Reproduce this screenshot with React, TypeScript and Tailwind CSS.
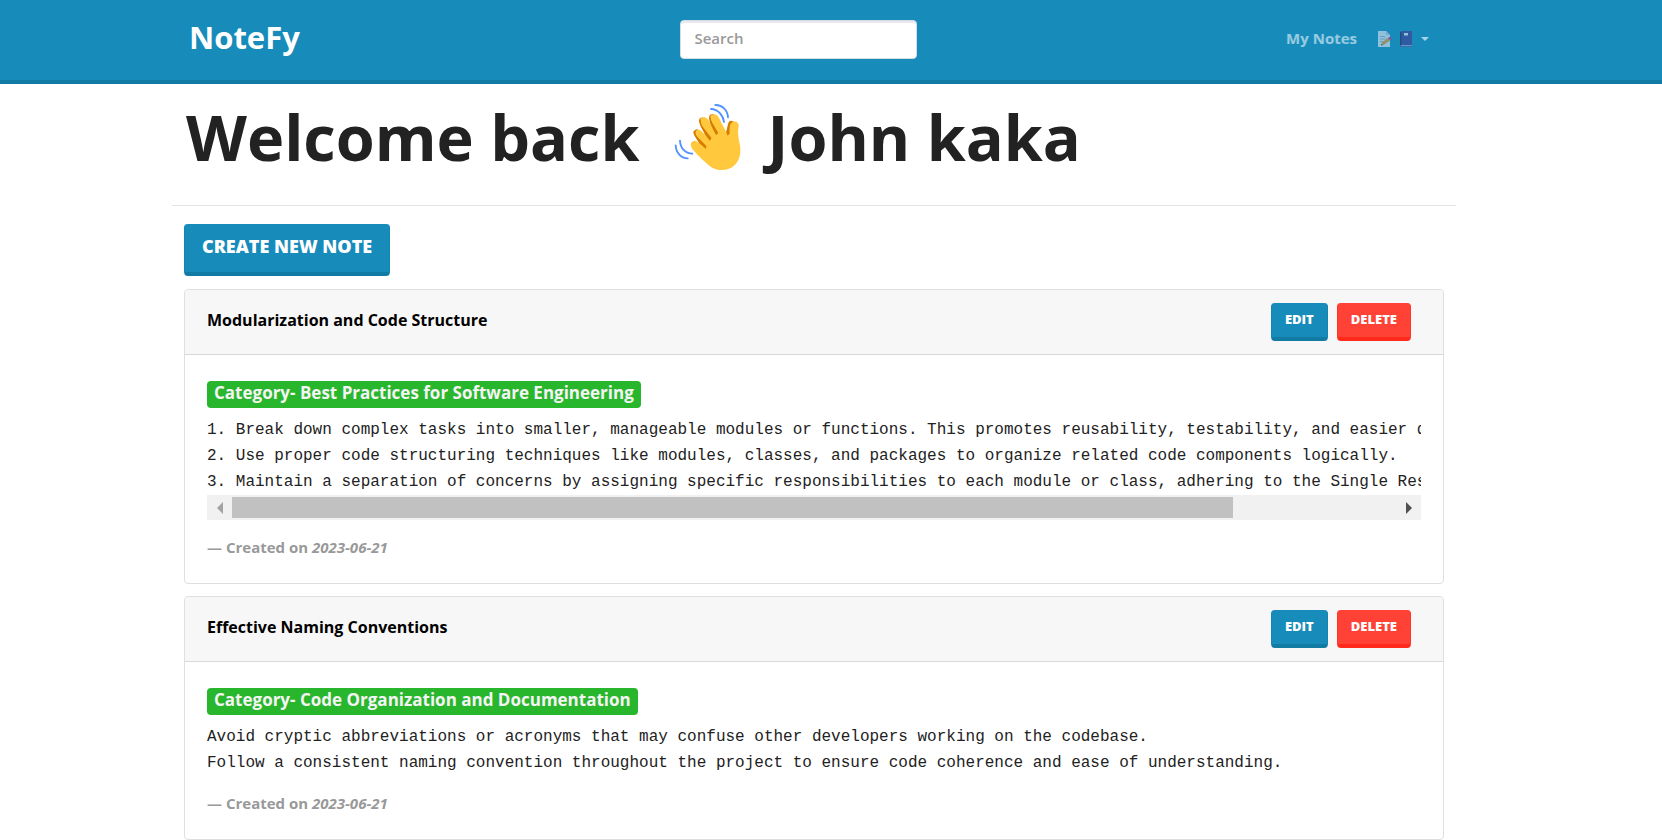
import { useRef } from "react";

type Note = {
  title: string;
  category: string;
  lines: string[];
  created: string;
  scrollable?: boolean;
};

const notes: Note[] = [
  {
    title: "Modularization and Code Structure",
    category: "Best Practices for Software Engineering",
    lines: [
      "1. Break down complex tasks into smaller, manageable modules or functions. This promotes reusability, testability, and easier debugging.",
      "2. Use proper code structuring techniques like modules, classes, and packages to organize related code components logically.",
      "3. Maintain a separation of concerns by assigning specific responsibilities to each module or class, adhering to the Single Responsibility Principle.",
    ],
    created: "2023-06-21",
    scrollable: true,
  },
  {
    title: "Effective Naming Conventions",
    category: "Code Organization and Documentation",
    lines: [
      "Avoid cryptic abbreviations or acronyms that may confuse other developers working on the codebase.",
      "Follow a consistent naming convention throughout the project to ensure code coherence and ease of understanding.",
    ],
    created: "2023-06-21",
  },
];

function WavingHand() {
  return (
    <svg viewBox="0 0 240 240" className="mr-[18px] ml-[30px] size-20 shrink-0" role="img" aria-label="Waving hand">
      <g fill="none" stroke="#d67d00" strokeWidth="19" strokeLinecap="round">
        <path d="M80 104 L101 141" />
        <path d="M97 68 L118 115" />
        <path d="M127 58 L136 102" />
        <path d="M184 78 L176 110" />
      </g>
      <path
        fill="#ffc83d"
        d="M63 143 C60 131 71 126 79 130 L107 150 L111 146 L78 112 C71 100 84 89 94 99 L121 126 L126 122 L92 78 C84 60 103 51 114 64 L140 109 L145 105 L122 66 C115 47 137 42 146 58 L173 111 L179 107 C178 94 177 82 185 74 C193 66 207 72 206 84 C202 104 205 119 209 137 C214 160 211 184 195 200 C176 220 144 221 122 206 C101 190 73 162 65 150 Z"
      />
      <g fill="none" stroke="#d67d00" strokeWidth="5" strokeLinecap="round">
        <path d="M74 105 C72 114 88 129 107 149" />
        <path d="M90 68 C89 83 104 104 120 125" />
        <path d="M120 60 C120 74 130 90 139 108" />
        <path d="M177 80 C175 91 176 101 173 109" />
      </g>
      <g fill="none" stroke="#5092ff" strokeWidth="5.5" strokeLinecap="round">
        <path d="M136 21 C156 20 173 36 174 58" />
        <path d="M123 33 C143 34 159 50 162 72" />
        <path d="M17 142 C18 165 33 180 53 181" />
        <path d="M30 128 C31 151 46 166 67 167" />
      </g>
    </svg>
  );
}

function MemoIcon() {
  return (
    <svg viewBox="0 0 16 16" className="size-4" aria-hidden="true">
      <path d="M1 0h8l4 4v12H1z" fill="#f3eef8" />
      <path d="M9 0v4h4z" fill="#cdc4d6" />
      <path d="M3 5.500h5M3 8h7M3 10.500h4" stroke="#b4acbc" />
      <path d="m4 14.500 1-3 6-4.500 2 2.500-6.500 4.500z" fill="#f59a23" />
      <path d="m11 7 1.500-1.200 2.500 2-2 1.700z" fill="#e0218a" />
      <path d="m4 14.500.6-1.800 1.400 1.400z" fill="#433b6b" />
    </svg>
  );
}

function NotebookIcon() {
  return (
    <svg viewBox="0 0 16 16" className="size-4" aria-hidden="true">
      <path d="M1 1.500 2.500 0H13v16H2.500L1 14.500z" fill="#46348e" />
      <path d="M1 1.500 2.500 0v13.500L1 14.500z" fill="#321b41" />
      <path d="M2 14.200h11v1H2z" fill="#b6c3d8" />
      <path d="M5 2h4v2.500H5z" fill="#f0f3f8" />
    </svg>
  );
}

function ScrollBar({ onMove }: { onMove: (by: number) => void }) {
  return (
    <div className="flex h-[25px] bg-[#f1f1f1]">
      <button type="button" aria-label="Scroll left" onClick={() => onMove(-80)} className="flex w-[25px] items-center justify-center">
        <svg viewBox="0 0 6 12" className="h-3 w-1.5" aria-hidden="true">
          <path d="M6 0v12L0 6z" fill="#a3a3a3" />
        </svg>
      </button>
      <div className="grow py-0.5">
        <div className="h-full w-[86%] bg-[#c1c1c1]" />
      </div>
      <button type="button" aria-label="Scroll right" onClick={() => onMove(80)} className="flex w-[25px] items-center justify-center">
        <svg viewBox="0 0 6 12" className="h-3 w-1.5" aria-hidden="true">
          <path d="M0 0v12l6-6z" fill="#505050" />
        </svg>
      </button>
    </div>
  );
}

function NoteCard({ note }: { note: Note }) {
  const body = useRef<HTMLPreElement>(null);
  const small = "rounded border-x border-b-4 px-[13px] pt-1.5 pb-2 text-[13px] leading-5 font-extrabold text-white";
  return (
    <article className="mb-3 rounded border border-[#dfdfdf]">
      <header className="flex items-center justify-between rounded-t border-b border-[#d8d8d8] bg-[#f7f7f7] py-[13px] pr-8 pl-[22px]">
        <h2 className="pb-1 text-base font-bold text-black">{note.title}</h2>
        <div className="flex gap-[9px]">
          <button type="button" className={`${small} border-[#127ba3] border-x-[#1585b1] bg-[#178cbb]`}>EDIT</button>
          <button type="button" className={`${small} border-[#ff291c] border-x-[#ff3529] bg-[#ff4136]`}>DELETE</button>
        </div>
      </header>
      <div className="px-[22px] pt-[26px] pb-[25px]">
        <h3 className="w-fit rounded bg-[#28b62c] px-[7px] pb-1 text-[17px] leading-[23px] font-bold text-[#f4f4f4]">
          Category- {note.category}
        </h3>
        <pre
          ref={body}
          className="mt-[9px] overflow-x-auto font-['Liberation_Mono',monospace] text-base leading-[26px] text-[#222] [scrollbar-width:none]"
        >
          {note.lines.join("\n")}
        </pre>
        {note.scrollable && <ScrollBar onMove={(by) => body.current?.scrollBy({ left: by })} />}
        <p className="mt-4 text-[15px] leading-[22px] font-bold text-[#999]">
          — Created on <cite>{note.created}</cite>
        </p>
      </div>
    </article>
  );
}

export default function App() {
  return (
    <div className="bg-white font-['Open_Sans','Noto_Sans',sans-serif] text-[#222]">
      <nav className="border-b-4 border-[#127ba3] bg-[#178cbb] pr-[34px]">
        <div className="mx-auto flex max-w-[1284px] items-start justify-between px-[17px] pt-5 pb-[21px]">
          <a href="#" className="pr-3 text-[31px] leading-[34px] font-bold text-white">NoteFy</a>
          <input
            type="search"
            aria-label="Search"
            placeholder="Search"
            className="h-[39px] w-[237px] rounded border border-[#d5dde2] bg-white px-[13px] pb-1 text-[15px] font-semibold shadow-[inset_0_2px_1px_#e8e8ee] placeholder:text-[#999]"
          />
          <div className="flex items-center pr-2.5 leading-[37px] text-white/55">
            <a href="#" className="pr-5 text-[15px] font-bold">My Notes</a>
            <button type="button" aria-label="Account menu" className="flex items-center gap-1.5">
              <span className="flex gap-1.5 opacity-55">
                <MemoIcon />
                <NotebookIcon />
              </span>
              <svg viewBox="0 0 8 4" className="h-1 w-2" aria-hidden="true">
                <path d="M0 0h8L4 4z" fill="#a6d3e6" />
              </svg>
            </button>
          </div>
        </div>
      </nav>
      <main className="pr-[34px]">
        <div className="mx-auto max-w-[1284px]">
          <h1 className="mt-3.5 flex px-3.5 text-[63px] leading-[78px] font-bold">
            <span>Welcome back</span>
            <WavingHand />
            <span>John kaka</span>
          </h1>
          <hr className="mt-[27px] border-[#e3e3e3]" />
          <div className="px-3 pt-[18px]">
            <button
              type="button"
              className="mb-[13px] block rounded border-x border-b-4 border-[#127ba3] border-x-[#1585b1] bg-[#178cbb] px-[17px] pt-2 pb-3 text-[18px] leading-7 font-extrabold text-white"
            >
              CREATE NEW NOTE
            </button>
            {notes.map((note) => (
              <NoteCard key={note.title} note={note} />
            ))}
          </div>
        </div>
      </main>
    </div>
  );
}
